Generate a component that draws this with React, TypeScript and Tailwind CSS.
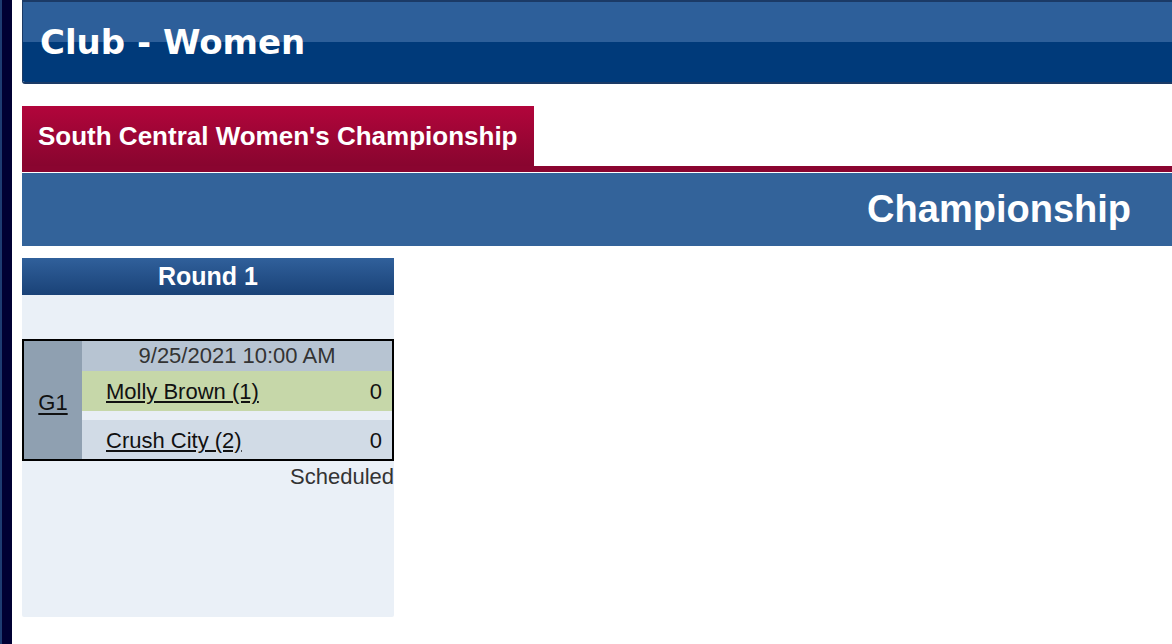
import React from "react";

export default function App() {
  return (
    <div className="flex min-h-[644px] w-[1172px] bg-white" style={{ fontFamily: '"Liberation Sans", Arial, sans-serif' }}>
      <div className="flex w-[12px] shrink-0">
        <div className="w-[2px] bg-[#1e3c72]" />
        <div className="w-[10px] bg-[#000033]" />
      </div>
      <div className="ml-[10px] flex flex-1 flex-col">
        <div className="flex h-[84px] flex-col overflow-hidden rounded-bl-[3px] border-t-2 border-b-2 border-l border-[#1b3a66]">
          <div className="h-[40px] bg-[#2d5f9a]" />
          <div className="h-[40px] bg-[#003a7a]" />
          <div className="-mt-[80px] flex h-[80px] items-center pl-[17px] pt-[0px] text-[34px] font-bold leading-none text-white" style={{ fontFamily: '"DejaVu Sans", Verdana, sans-serif' }}>
            Club - Women
          </div>
        </div>
        <div className="mt-[22px] flex">
          <div className="flex h-[60px] w-[512px] items-center bg-gradient-to-b from-[#b2053b] to-[#88052f] pl-[16px] text-[26px] font-bold text-white">
            South Central Women's Championship
          </div>
        </div>
        <div className="h-[6px] bg-[#8a0530]" />
        <div className="mt-[1px] flex h-[73px] items-center justify-end bg-[#33639a] pr-[41px] text-[38px] font-bold text-white">
          Championship
        </div>
        <div className="mt-[12px] flex w-[372px] flex-col">
          <div className="flex h-[37px] items-center justify-center bg-gradient-to-b from-[#30609b] to-[#1a4277] text-[25px] font-bold text-white">
            Round 1
          </div>
          <div className="flex h-[322px] flex-col rounded-b-[2px] bg-[#eaf0f7]">
            <div className="mt-[44px] flex border-2 border-black">
              <div className="flex w-[58px] items-center justify-center bg-[#8fa0b1] pt-[4px] text-[22px] text-[#111]">
                <span className="underline underline-offset-[3px]">G1</span>
              </div>
              <div className="flex flex-1 flex-col">
                <div className="flex h-[30px] items-center justify-center bg-[#b7c4d2] text-[22px] leading-none text-[#333]">
                  9/25/2021 10:00 AM
                </div>
                <div className="flex h-[40px] items-center justify-between bg-[#c6d7a9] pl-[24px] pr-[10px] pt-[2px] text-[22px] leading-none text-[#111]">
                  <span className="underline underline-offset-[2px]">Molly Brown (1)</span>
                  <span>0</span>
                </div>
                <div className="h-[9px] bg-[#e8eef5]" />
                <div className="flex h-[39px] items-center justify-between bg-[#d1dbe6] pl-[24px] pr-[10px] pt-[2px] text-[22px] leading-none text-[#111]">
                  <span className="underline underline-offset-[2px]">Crush City (2)</span>
                  <span>0</span>
                </div>
              </div>
            </div>
            <div className="mt-[2px] text-right text-[22px] leading-[28px] text-[#333]">Scheduled</div>
          </div>
        </div>
      </div>
    </div>
  );
}
